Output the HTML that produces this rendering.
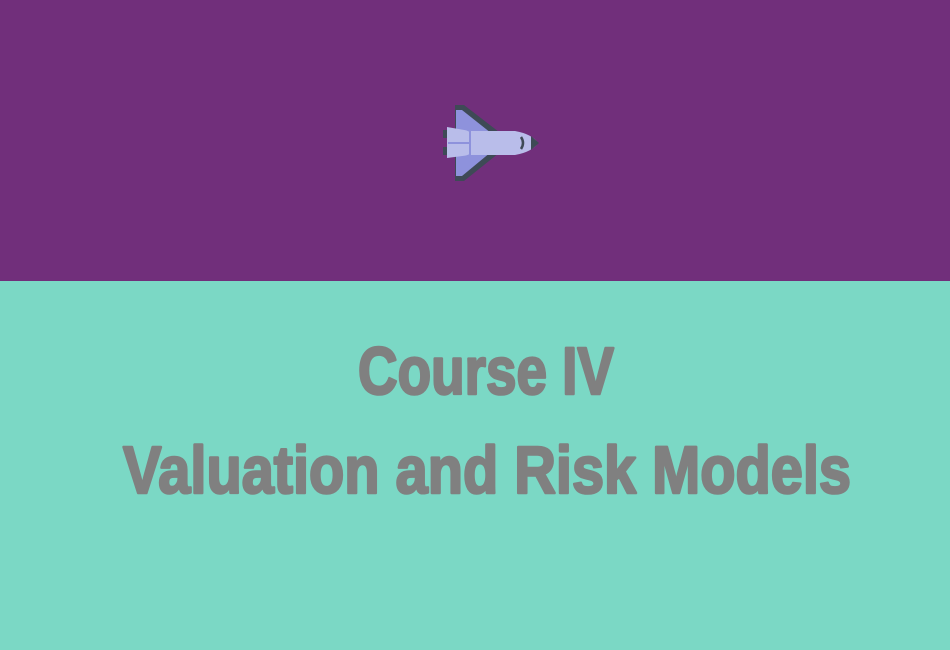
<!DOCTYPE html>
<html><head><meta charset="utf-8"><style>
html,body{margin:0;padding:0;width:950px;height:650px;overflow:hidden}
</style></head><body>
<svg width="950" height="650" viewBox="0 0 950 650" xmlns="http://www.w3.org/2000/svg">
<rect x="0" y="0" width="950" height="281" fill="#712f7b"/>
<rect x="0" y="281" width="950" height="369" fill="#7bd8c5"/>
<g>
<path d="M455 105 L464 105 L499 132 L499 153 L464 181 L455 181 Z" fill="#3e4a56"/>
<path d="M456 110 L462 110 L491 133 L491 152 L462 176 L456 176 Z" fill="#8e92dc"/>
<rect x="443" y="130" width="5" height="8" fill="#3e4a56"/>
<rect x="443" y="147" width="5" height="8" fill="#3e4a56"/>
<path d="M447 127 L470 131 L515 131 Q532 134 538 143 Q532 152 515 155 L470 155 L447 158 Z" fill="#b9bdea"/>
<path d="M448 143 L470 143" stroke="#8e92dc" stroke-width="2"/>
<path d="M470 131 L470 155" stroke="#8e92dc" stroke-width="2"/>
<path d="M457 125 L470 131 M457 160 L470 155" stroke="#8e92dc" stroke-width="2"/>
<path d="M531 136 L539 143 L531 150 Z" fill="#3e4a56"/>
<path d="M521 137 Q525 143 521 149" stroke="#3e4a56" stroke-width="2.5" fill="none"/>
</g>
<g font-family="Liberation Sans Narrow, Liberation Sans, sans-serif" font-weight="bold" font-size="67" fill="#808080" stroke="#808080" stroke-width="2.6" stroke-linejoin="round">
<text x="358" y="394" textLength="256" lengthAdjust="spacingAndGlyphs">Course IV</text>
<text x="123" y="493" textLength="728" lengthAdjust="spacingAndGlyphs">Valuation and Risk Models</text>
</g>
</svg>
</body></html>
